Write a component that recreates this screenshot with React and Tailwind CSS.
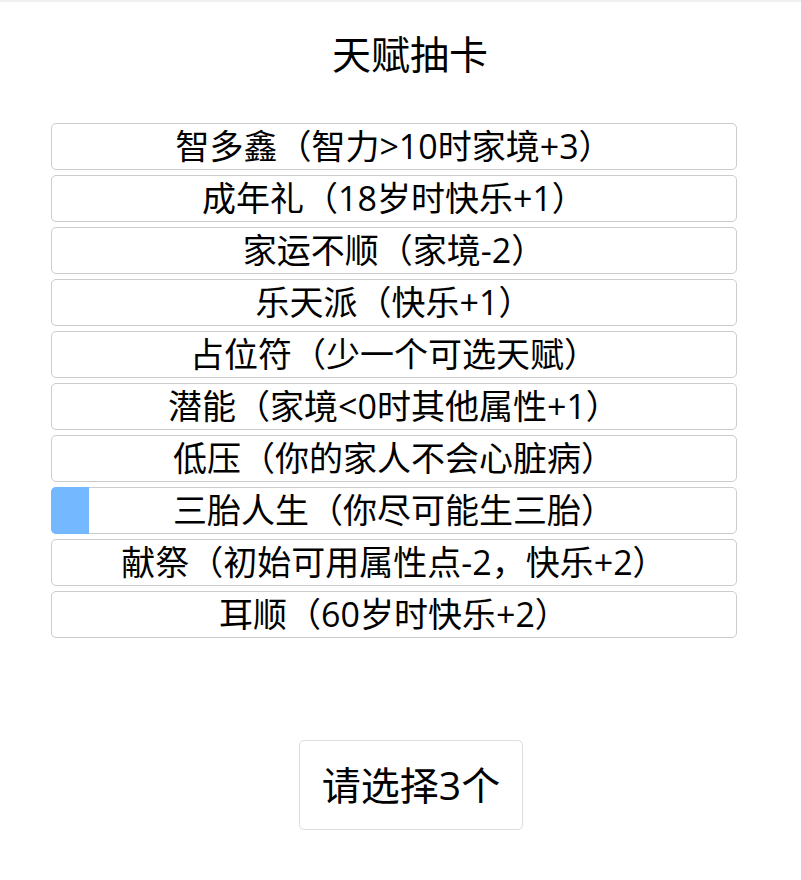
import React from "react";

const items = [
  "智多鑫（智力>10时家境+3）",
  "成年礼（18岁时快乐+1）",
  "家运不顺（家境-2）",
  "乐天派（快乐+1）",
  "占位符（少一个可选天赋）",
  "潜能（家境<0时其他属性+1）",
  "低压（你的家人不会心脏病）",
  "三胎人生（你尽可能生三胎）",
  "献祭（初始可用属性点-2，快乐+2）",
  "耳顺（60岁时快乐+2）",
];

export default function App() {
  return (
    <div
      className="min-h-[880px] w-[801px] bg-white text-black"
      style={{ fontFamily: '"Open Sans", "Noto Sans CJK SC", sans-serif' }}
    >
      <div className="h-[2px] bg-[#f0f0f0]" />
      <div className="pt-[24px] pl-[19px] text-center text-[39px] leading-[56px]">天赋抽卡</div>
      <ul className="mt-[41px] ml-[51px] w-[686px] flex flex-col gap-[5px]">
        {items.map((t, i) => (
          <li
            key={i}
            className="relative h-[47px] rounded-[5px] border border-[#cccccc] text-center text-[34px] leading-[45px] whitespace-nowrap"
          >
            {i === 7 && (
              <div className="absolute left-[-1px] top-[-1px] bottom-[-1px] w-[38px] rounded-l-[5px] bg-[#74b9ff]" />
            )}
            <span className="relative">{t}</span>
          </li>
        ))}
      </ul>
      <div className="mt-[102px] flex justify-center pl-[21px]">
        <button className="h-[90px] px-[22px] rounded-[5px] border border-[#dddddd] bg-white text-[39px]">
          请选择3个
        </button>
      </div>
    </div>
  );
}
